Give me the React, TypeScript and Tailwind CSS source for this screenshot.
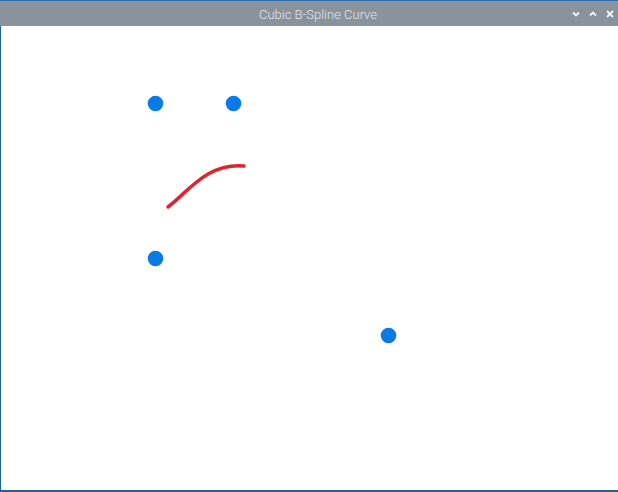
import React from "react";

export default function App() {
  return (
    <div className="w-[618px] h-[492px] bg-[#1f5f9e] flex flex-col overflow-hidden" style={{ fontFamily: "Roboto, 'Liberation Sans', sans-serif" }}>
      <div className="h-px bg-[#2a6db0]" />
      <div className="h-[25px] bg-[#8a939b] flex items-center relative">
        <div className="flex-1 text-center text-[13px] font-light text-[#e2e5e8] leading-none pt-[1px] pl-[18px]">Cubic B-Spline Curve</div>
        <div className="absolute right-[3px] top-0 h-full flex items-center gap-[7px] text-white">
          <svg width="10" height="10" viewBox="0 0 10 10"><path d="M2 3.5 L5 6.5 L8 3.5" stroke="#f4f5f6" strokeWidth="1.8" fill="none" /></svg>
          <svg width="10" height="10" viewBox="0 0 10 10"><path d="M2 6.5 L5 3.5 L8 6.5" stroke="#f4f5f6" strokeWidth="1.8" fill="none" /></svg>
          <svg width="10" height="10" viewBox="0 0 10 10"><path d="M2 2 L8 8 M8 2 L2 8" stroke="#f4f5f6" strokeWidth="1.8" fill="none" /></svg>
        </div>
      </div>
      <div className="flex-1 pl-px pb-[2px] flex">
        <div className="flex-1 bg-white relative">
          <svg className="absolute inset-0" width="617" height="464" viewBox="1 26 617 464">
            <path d="M168 207 C189 191 207 163 244 166" stroke="#e3222f" strokeWidth="3.5" strokeLinecap="round" fill="none" />
            <circle cx="155.5" cy="103.5" r="7.8" fill="#0a7ae6" />
            <circle cx="233.5" cy="103.5" r="7.8" fill="#0a7ae6" />
            <circle cx="155.5" cy="258.5" r="7.8" fill="#0a7ae6" />
            <circle cx="388.5" cy="335.5" r="7.8" fill="#0a7ae6" />
          </svg>
        </div>
      </div>
    </div>
  );
}
